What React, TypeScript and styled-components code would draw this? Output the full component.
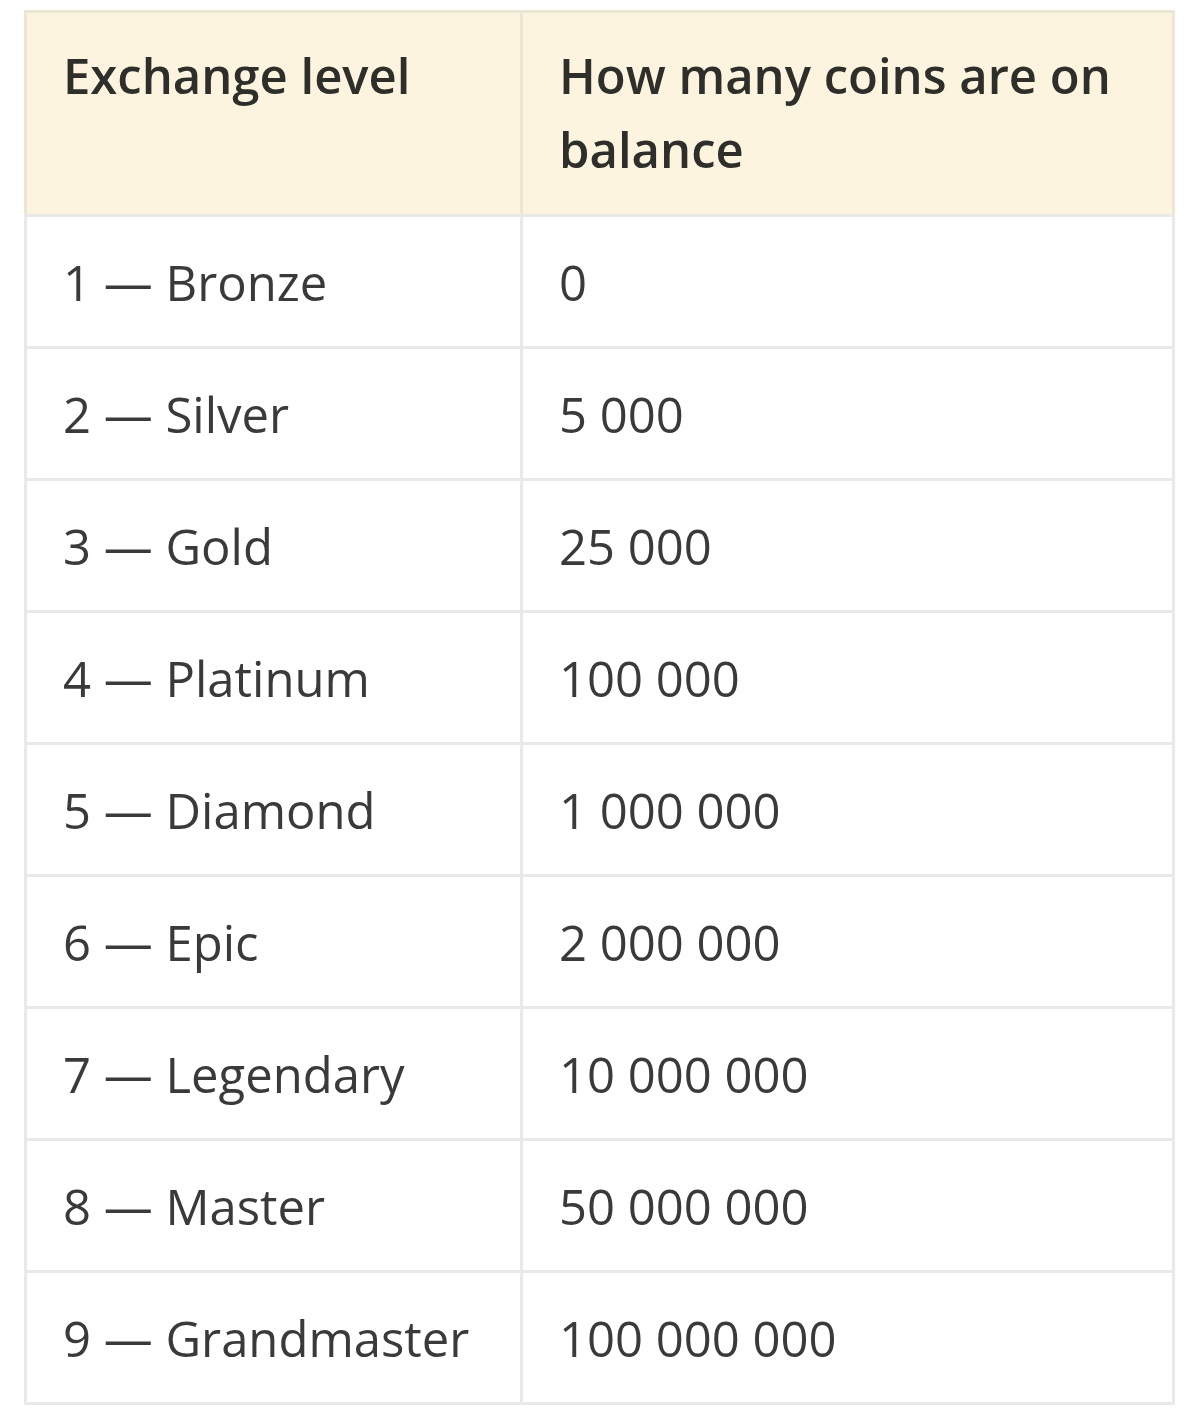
import React from 'react';
import styled, { createGlobalStyle } from 'styled-components';

// Styles
const GlobalStyle = createGlobalStyle`
  html, body {
    margin: 0;
    padding: 0;
    background: #ffffff;
  }
  body {
    font-family: 'Open Sans', 'Noto Sans', sans-serif;
  }
`;

const Page = styled.div`
  padding: 10px 25px 20px 24px;
`;

const Table = styled.table`
  width: 1151px;
  border-collapse: collapse;
  table-layout: fixed;
  border: 3px solid #e9e9e9;
`;

const Head = styled.thead`
  background: #fcf4df;
`;

const HeadCell = styled.th`
  text-align: left;
  vertical-align: top;
  padding: 25px 36px 28px;
  font-size: 49px;
  line-height: 74px;
  font-weight: 600;
  color: #2e2e2a;
  border: 3px solid #ece6d4;
  border-bottom-color: #e9e9e9;
`;

const Row = styled.tr`
  height: 132px;
`;

const Cell = styled.td`
  padding: 0 36px;
  font-size: 49px;
  line-height: 74px;
  color: #3a3a3a;
  vertical-align: middle;
  border: 3px solid #e9e9e9;
  white-space: nowrap;
`;

interface Level {
  name: string;
  coins: string;
}

const levels: Level[] = [
  { name: '1 — Bronze', coins: '0' },
  { name: '2 — Silver', coins: '5 000' },
  { name: '3 — Gold', coins: '25 000' },
  { name: '4 — Platinum', coins: '100 000' },
  { name: '5 — Diamond', coins: '1 000 000' },
  { name: '6 — Epic', coins: '2 000 000' },
  { name: '7 — Legendary', coins: '10 000 000' },
  { name: '8 — Master', coins: '50 000 000' },
  { name: '9 — Grandmaster', coins: '100 000 000' },
];

const App: React.FC = () => {
  return (
    <>
      <GlobalStyle />
      <Page>
        <Table>
          <colgroup>
            <col style={{ width: 496 }} />
            <col />
          </colgroup>
          <Head>
            <tr>
              <HeadCell>Exchange level</HeadCell>
              <HeadCell>How many coins are on balance</HeadCell>
            </tr>
          </Head>
          <tbody>
            {levels.map((level) => (
              <Row key={level.name}>
                <Cell>{level.name}</Cell>
                <Cell>{level.coins}</Cell>
              </Row>
            ))}
          </tbody>
        </Table>
      </Page>
    </>
  );
};

export default App;
